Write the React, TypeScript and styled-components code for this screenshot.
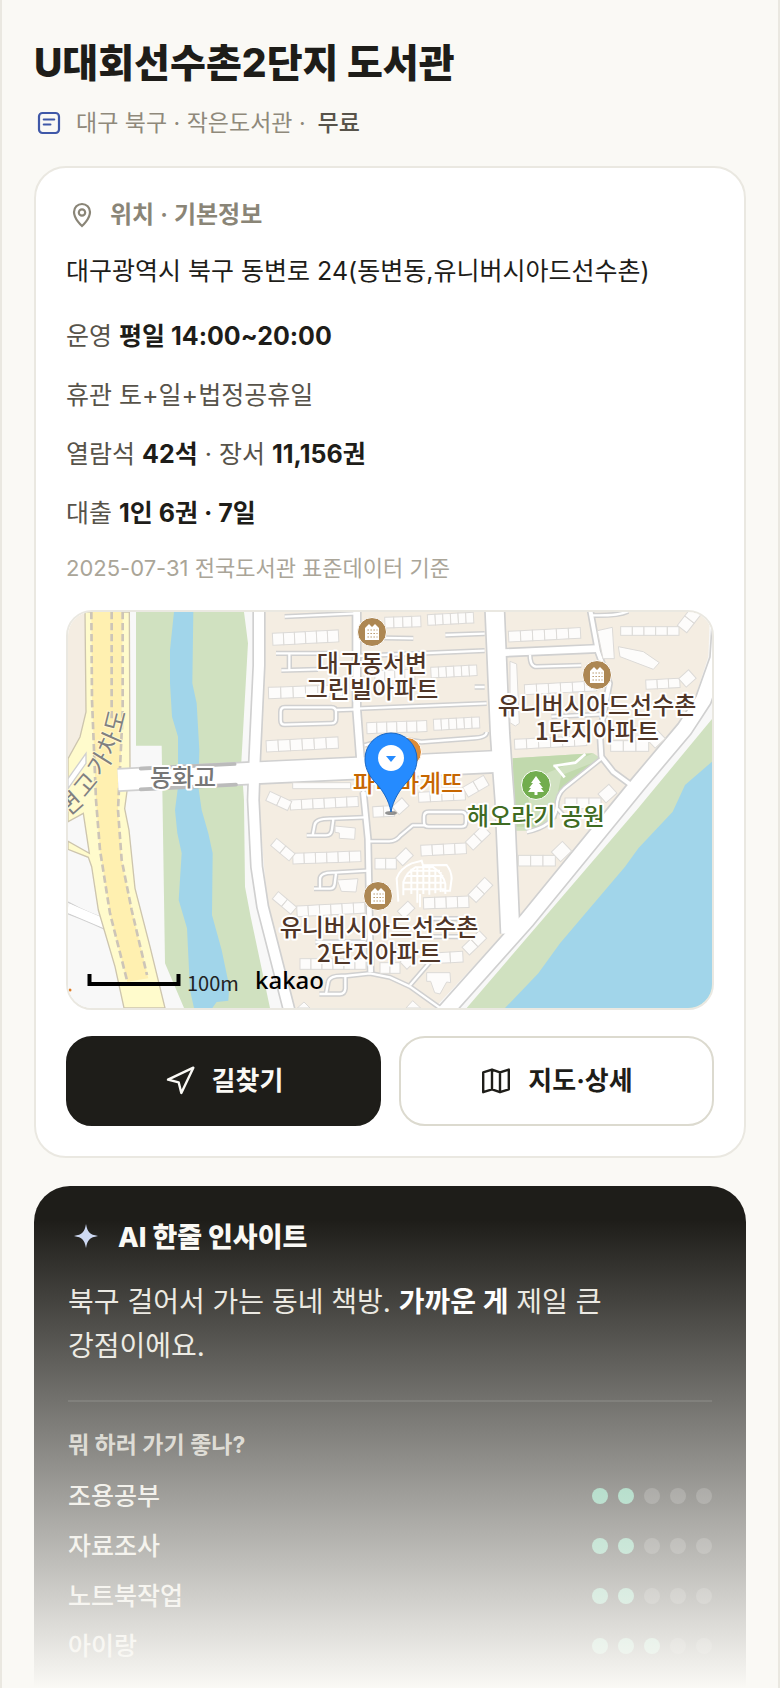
import { FC, ReactNode } from "react"
import styled, { createGlobalStyle } from "styled-components"
import { Navigation } from "lucide-react"

const GlobalStyle = createGlobalStyle`
  * {
    box-sizing: border-box;
  }

  body {
    margin: 0;
    background: #faf9f5;
    color: #1e1d19;
    font-family: Inter, "Noto Sans CJK KR", sans-serif;
  }

  h1, h2, h3, p, ul {
    margin: 0;
    padding: 0;
  }
`

const Page = styled.main`
  position: relative;
  min-height: 100vh;
  padding: 40px 32px 0;
  border: solid #eae8e1;
  border-width: 0 2px;
  overflow: hidden;
`

const Title = styled.h1`
  font-size: 39px;
  line-height: 46px;
  font-weight: 800;
`

const Meta = styled.p`
  display: flex;
  align-items: center;
  gap: 12px;
  margin: 22px 0 28px;
  font-size: 23px;
  line-height: 30px;
  color: #8f897b;

  strong {
    font-weight: 500;
    color: #57534a;
  }
`

const Card = styled.section`
  padding: 31px 30px 30px;
  background: #fff;
  border: 2px solid #eae8e1;
  border-radius: 32px;
`

const CardTitle = styled.h2`
  display: flex;
  align-items: center;
  gap: 12px;
  font-size: 24px;
  line-height: 32px;
  font-weight: 600;
  color: #8a8577;
`

const Address = styled.p`
  margin: 22px 0 26px;
  font-size: 25px;
  line-height: 36px;
`

const InfoList = styled.div`
  display: flex;
  flex-direction: column;
  gap: 17px;
`

const InfoRow = styled.p`
  font-size: 25px;
  line-height: 42px;
  color: #57534a;

  strong {
    font-weight: 700;
    color: #1e1d19;
  }
`

const Source = styled.p`
  margin: 17px 0 25px;
  font-size: 22px;
  line-height: 34px;
  color: #aaa598;
`

const MapFrame = styled.div`
  height: 400px;
  border: 2px solid #eae8e1;
  border-radius: 26px;
  overflow: hidden;

  svg {
    display: block;
    width: 100%;
    height: 100%;
  }
`

const Actions = styled.div`
  display: grid;
  grid-template-columns: 1fr 1fr;
  gap: 18px;
  margin-top: 26px;
`

const ActionButton = styled.button<{ $primary?: boolean }>`
  display: flex;
  align-items: center;
  justify-content: center;
  gap: 16px;
  height: 90px;
  padding: 0;
  border: 2px solid ${(props) => (props.$primary ? "#1e1d19" : "#dcdacf")};
  border-radius: 26px;
  background: ${(props) => (props.$primary ? "#1e1d19" : "#fff")};
  color: ${(props) => (props.$primary ? "#faf9f5" : "#1e1d19")};
  font-family: inherit;
  font-size: 26px;
  line-height: 36px;
  font-weight: 700;
  cursor: pointer;
`

const InsightCard = styled.section`
  margin-top: 28px;
  padding: 34px 34px 17px;
  background: #1e1d19;
  border-radius: 36px 36px 0 0;
  color: #e8e6df;
`

const InsightTitle = styled.h2`
  display: flex;
  align-items: center;
  gap: 14px;
  font-size: 27px;
  line-height: 36px;
  font-weight: 800;
  color: #faf9f5;
`

const InsightText = styled.p`
  max-width: 560px;
  margin: 24px 0 32px;
  font-size: 28px;
  line-height: 44px;
  word-break: keep-all;

  strong {
    font-weight: 700;
    color: #fff;
  }
`

const Purpose = styled.div`
  padding-top: 26px;
  border-top: 2px solid rgba(255, 255, 255, 0.1);
`

const PurposeTitle = styled.h3`
  margin-bottom: 9px;
  font-size: 23px;
  line-height: 34px;
  font-weight: 700;
  color: #c4c1b8;
`

const ScoreList = styled.ul`
  list-style: none;
`

const ScoreRow = styled.li`
  display: flex;
  align-items: center;
  justify-content: space-between;
  font-size: 25px;
  line-height: 50px;
  font-weight: 500;
`

const Dots = styled.span`
  display: flex;
  gap: 10px;
`

const Dot = styled.span<{ $on: boolean }>`
  width: 16px;
  height: 16px;
  border-radius: 50%;
  background: ${(props) => (props.$on ? "#5ebb96" : "rgba(255, 255, 255, 0.18)")};
`

// fades the rest of the page out towards the bottom edge
const Fade = styled.div`
  position: absolute;
  inset: auto 0 0;
  height: 468px;
  background: linear-gradient(rgba(250, 249, 245, 0), #faf9f5);
  pointer-events: none;
`

const MapLabel = styled.text`
  font-family: "Noto Sans CJK KR", sans-serif;
  font-size: 24px;
  font-weight: 500;
  text-anchor: middle;
  paint-order: stroke;
  stroke: #fff;
  stroke-width: 4px;
  stroke-linejoin: round;
`

const RoadLabel = styled(MapLabel)`
  fill: #808080;
  font-weight: 400;
  stroke: #fff8d0;
  stroke-width: 2px;
`

const NoteIcon = () => (
  <svg width="30" height="30" fill="none" stroke="#3f58a8" strokeWidth="2.2" strokeLinecap="round">
    <rect x="5" y="5" width="20" height="20" rx="3.5" />
    <path d="M9.8 11.5h10.4M9.8 16.5h6.6" />
  </svg>
)

const PinIcon = () => (
  <svg width="32" height="32" fill="none" stroke="currentColor" strokeWidth="2.2">
    <path d="M16 27s8-7 8-14a8 8 0 0 0-16 0c0 7 8 14 8 14z" />
    <circle cx="16" cy="13.5" r="3.2" />
  </svg>
)

const FoldedMapIcon = () => (
  <svg width="32" height="32" viewBox="0 0 24 24" fill="none" stroke="currentColor" strokeWidth="1.8" strokeLinejoin="round">
    <path d="M2.4 5.6 9 3.4l6 2.2 6.6-2.2v14.8L15 20.4l-6-2.2-6.6 2.2zM9 3.4v14.8M15 5.6v14.8" />
  </svg>
)

const SparkIcon = () => (
  <svg width="36" height="36" fill="#ccd8f3">
    <path d="M18 4c1.600 8.500 3.500 10.400 12 12-8.500 1.600-10.400 3.500-12 12-1.600-8.500-3.500-10.400-12-12 8.500-1.600 10.400-3.500 12-12z" />
  </svg>
)

type Row = [x: number, y: number, count: number, width: number, height: number, angle?: number]

const BUILDINGS: Row[] = [
  [613, 64, 6, 33, 36, -3],
  [601, 226, 6, 37, 34, -2],
  [594, 386, 6, 36, 34, -3],
  [896, 332, 6, 30, 33, -2],
  [1096, 322, 6, 23, 33, -3],
  [1078, 8, 6, 23, 32, -3],
  [950, 16, 4, 27, 32, -2],
  [1088, 166, 6, 23, 32, -3],
  [920, 176, 4, 30, 32, -2],
  [1321, 58, 6, 36, 32, -3],
  [1369, 218, 6, 36, 30, -3],
  [1339, 382, 6, 36, 30, -3],
  [1658, 44, 5, 35, 26],
  [1828, 40, 2, 36, 36, -52],
  [1733, 204, 3, 34, 28, -3],
  [1832, 200, 1, 40, 34, -42],
  [1628, 386, 3, 38, 32],
  [1738, 384, 1, 42, 34, -44],
  [1491, 558, 3, 36, 32],
  [1590, 546, 1, 44, 36, -42],
  [666, 564, 6, 34, 30, -3],
  [606, 538, 2, 36, 30, 25],
  [914, 584, 2, 32, 32, -3],
  [972, 584, 1, 40, 32, -42],
  [1051, 541, 4, 35, 30, -3],
  [1184, 526, 2, 36, 34, -30],
  [674, 724, 6, 34, 32, -2],
  [626, 679, 2, 36, 28, 40],
  [686, 882, 6, 34, 32, -3],
  [631, 839, 2, 36, 28, 40],
  [696, 1040, 6, 33, 32],
  [921, 739, 2, 32, 32],
  [982, 738, 1, 44, 32, -44],
  [1058, 700, 4, 34, 32, -3],
  [1192, 690, 2, 36, 34, -44],
  [1066, 857, 4, 34, 34, -2],
  [1200, 848, 2, 36, 34, -46],
  [1108, 1022, 2, 38, 32, -3],
  [1182, 1006, 2, 36, 32, -44],
  [936, 1052, 2, 30, 32],
  [996, 1050, 1, 36, 30, -44],
  [988, 898, 1, 44, 30, -44],
  [1351, 730, 3, 37, 32],
  [1450, 720, 1, 46, 40, -44],
]

const BLOCKS = [
  "M1588 56l45-10 6 94h-34z",
  "M1651 104l75 15 48 33-18 20-100-38z",
  "M1326 148l20 8 8 178-12 8-16-10z",
  "M801 642l61 6-2 34-46-3v-16l-13-2z",
  "M808 804l62-4-6 40-44-2z",
  "M1076 1082h70l2 30-12-2-20 36-16-4-12-34h-12z",
  "M688 1188l20-18 18 18z",
  "M1014 1188l20-22 24 22z",
  "M674 512h174v18H674z",
]

const LANES = [
  "M650 14l216-10",
  "M624 124h176",
  "M664 124v50M640 175l110-3",
  "M906 77l130 2",
  "M1132 69l118-4",
  "M870 132l380-16",
  "M866 290l390-16",
  "M650 286h140q14 0 14 14v20q0 14-14 14l-140 4q-12 0-12-14v-24q0-14 12-14z",
  "M804 294l62-2",
  "M890 400q50-16 110-20l60 10 160-12q36-2 36-18",
  "M1220 225h30",
  "M1386 128q0 36 20 36l134-4",
  "M1570 10q80 2 110-12",
  "M1450 314l170-8",
  "M1600 440l-110 88q-24 20-24 60l28 30M1466 588q-6 54-90 72",
  "M886 520v44",
  "M888 616l-94 4q-50-2-54 18l-6 32h40q16 0 18-18l4-30M734 670h-18",
  "M900 688h64q20 0 34-18l36-30h36",
  "M1082 600h98q14 0 14 14v16q0 14-14 14h-98q-14 0-14-14v-16q0-14 14-14z",
  "M900 776l-100 6q-44-2-44 20v28h30q12 0 14-14l4-32M756 830h-18",
  "M742 990h150",
  "M1090 920h110M1090 974h100",
  "M832 1092l74-8 60 12 60 28 90 64M832 1092q-50-4-52 22l-6 32h42q14 0 16-16v-38M774 1146h-20",
  "M1026 1120l60-70 2-60",
]

const ROADS: { d: string; width: number }[] = [
  { d: "M866-10v300l12 160", width: 20 },
  { d: "M886 540l14 140 4 210 4 190", width: 14 },
  { d: "M1310 122l276-12", width: 20 },
  { d: "M1566-10l24 130 34 94-28 150 4 70 36 46 60 44", width: 12 },
  { d: "M573-10v170l-13 280-4 124 10 200 18 120 82 320", width: 30 },
  { d: "M150 504l426-22 324-15 380-18", width: 62 },
  { d: "M1280-10l16 374 8 120 6 80 17 400", width: 54 },
  { d: "M1960-10l-10 150-44 124-56 86-139 165-335 410-250 280", width: 44 },
]

// the overpass name runs up along the road, one turned letter at a time
const OVERPASS = [
  { char: "변", x: 3, y: 192, angle: -42 },
  { char: "고", x: 18, y: 173, angle: -50 },
  { char: "가", x: 32, y: 152, angle: -58 },
  { char: "차", x: 42, y: 131, angle: -66 },
  { char: "도", x: 48, y: 109, angle: -76 },
]

const Apartment: FC<{ x: number; y: number }> = ({ x, y }) => (
  <g transform={`translate(${x} ${y})`}>
    <circle r="14.500" fill="#ad8753" stroke="#fff" strokeWidth="1" />
    <path d="M-7 8V-4l4-4 3 3 3-3 4 4V8z" fill="#fff" />
    <path d="M-4.500-2h10M-4.500 1.500h10M-4.500 5h10" stroke="#ad8753" strokeWidth="1.200" strokeDasharray="1.300 1.700" />
  </g>
)

const LocationMap = () => (
  <svg viewBox="0 0 644 396" preserveAspectRatio="xMidYMid slice" role="img" aria-label="도서관 위치 지도">
    <rect width="644" height="396" fill="#f8f8f8" />
    <g transform="scale(0.333333)">
      <path d="M204 0h324l12 94-20 356 8 114 3 260 17 90 58 274H348l-57-134-10-653h-77z" fill="#d0e1c0" />
      <path
        d="M318 0h58l-3 214 13 60 8 140-3 110 10 70 20 70 13 60-2 185 29 105 23 110-3 42-35 4-13 18h-55l-12-54-9-185-25-85 9-140-13-60-7-70 9-70V374l-18-60-6-100V114z"
        fill="#a1d5ea"
      />
      <path d="M1932 321l-226 273-510 594h736z" fill="#d0e1c0" />
      <path d="M1932 449l-81 70-37 80-103 110-40 55-195 230-65 90-100 104h621z" fill="#a1d5ea" />

      <path d="M0 870q60 34 150 64M0 905q70 26 160 70" stroke="#d0d0d0" strokeWidth="4" fill="none" />
      <path d="M0 888q70 30 156 66" stroke="#fff" strokeWidth="28" fill="none" />
      <path d="M0 0h50l4 300-18 75-36 60z" fill="#f4ede2" />
      <path
        d="M51 0h133l2 470-16 120 13 64 18 175 45 175 45 184H168l-27-124-50-170-20-130-10-28-61-24v-24l64 36-18-120-46 25V440l36-65 18-75z"
        fill="#fffbcc"
        stroke="#cdc5ae"
        strokeWidth="4"
      />
      <path d="M0 500l54-76v30L0 530z" fill="#fff" stroke="#d0d0d0" strokeWidth="4" />
      <path d="M70 0h94l-4 400-10 194 11 150 30 150 50 205-63 10-52-205-30-190-12-150-12-300z" fill="#fff0b0" />
      <path
        d="M70 0l2 264 12 300 12 150 30 190 52 205M131 0v320M164 0v300l-14 294 11 150 30 150 46 195"
        fill="none"
        stroke="#cdc5b8"
        strokeWidth="8"
        strokeDasharray="22 11"
      />

      <path
        d="M590 0h1336l-5 134-55 170-180 210-170 230-155 165-261 279H678l-77-274-30-350 1-100z"
        fill="#f4ede2"
      />
      <path d="M1334 439l242-15 24 16-124 100-10 80-66 36h-60z" fill="#d0e1c0" />
      <path d="M1334 439l242-15-140 60-60 60 30 100h-62zM1480 490l100-40-110 90z" fill="#c1d9ad" />
      <path d="M1460 460l30 36M1456 462l66-10 30-26" fill="none" stroke="#fff" strokeWidth="8" />

      <g fill="none" stroke="#d0d0d0" strokeLinejoin="round">
        {LANES.map((d) => (
          <path key={d} d={d} strokeWidth="16" />
        ))}
        {ROADS.map((road) => (
          <path key={road.d} d={road.d} strokeWidth={road.width + 10} />
        ))}
      </g>
      <g fill="none" stroke="#fff" strokeLinejoin="round">
        {LANES.map((d) => (
          <path key={d} d={d} strokeWidth="7" />
        ))}
        {ROADS.map((road) => (
          <path key={road.d} d={road.d} strokeWidth={road.width} />
        ))}
      </g>

      <g fill="#fdfcfb" stroke="#dcdad7" strokeWidth="3">
        {BUILDINGS.map(([x, y, count, width, height, angle = 0]) => (
          <g key={`${x}-${y}`} transform={`translate(${x} ${y}) rotate(${angle})`}>
            {Array.from({ length: count }, (_, i) => (
              <rect key={i} x={i * width} width={width} height={height} />
            ))}
          </g>
        ))}
        {BLOCKS.map((d) => (
          <path key={d} d={d} />
        ))}
      </g>

      <path
        d="M991 869l-5-70q10-30 45-45l30-8 4 14 71-1q14 18 15 40l-5 37h-24M1006 850v-40q10-30 36-44h54q30 20 36 50v30M1014 792h112M1006 812h124M1006 832h126M1028 776h88M1030 770v76M1048 764v108M1066 762v84M1084 764v84M1102 768v76M1118 780v60M1056 846v40"
        fill="none"
        stroke="#fff"
        strokeWidth="6"
      />
      <path d="M218 470l282-14M218 532l286-14" stroke="#bbb" strokeWidth="11" strokeLinecap="round" />
    </g>

    {OVERPASS.map(({ char, x, y, angle }) => (
      <RoadLabel key={char} y="8" transform={`translate(${x} ${y}) rotate(${angle})`}>
        {char}
      </RoadLabel>
    ))}
    <MapLabel x="115" y="174" fill="#777">동화교</MapLabel>

    <Apartment x={304} y={20} />
    <MapLabel fill="#4f3527">
      <tspan x="304" y="60">대구동서변</tspan>
      <tspan x="304" y="86">그린빌아파트</tspan>
    </MapLabel>
    <Apartment x={529} y={63} />
    <MapLabel fill="#4f3527">
      <tspan x="529" y="102">유니버시아드선수촌</tspan>
      <tspan x="529" y="128">1단지아파트</tspan>
    </MapLabel>
    <Apartment x={310} y={284} />
    <MapLabel fill="#4f3527">
      <tspan x="311" y="324">유니버시아드선수촌</tspan>
      <tspan x="311" y="350">2단지아파트</tspan>
    </MapLabel>

    <circle cx="468" cy="173" r="14.500" fill="#72ad4e" stroke="#fff" />
    <path d="M468 164l-5 7h2l-4 5h2l-3 4h6.500v3h3v-3h6.500l-3-4h2l-4-5h2z" fill="#fff" />
    <MapLabel x="468" y="213" fill="#3f6b22">해오라기 공원</MapLabel>

    <circle cx="339" cy="140" r="14.500" fill="#dd8c38" stroke="#fff" />
    <MapLabel x="340" y="180" fill="#c76600">파리바게뜨</MapLabel>

    <ellipse cx="323" cy="201" rx="6" ry="2" fill="#777" opacity="0.8" />
    <path
      d="M323 200c-2-12-9-23-17-31-6-7-9-14-9-22a26 26 0 0 1 52 0c0 8-3 15-9 22-8 8-15 19-17 31z"
      fill="#258bff"
      stroke="#1766c4"
    />
    <circle cx="323" cy="146" r="13" fill="#fff" />
    <path d="M318 144h10l-5 6z" fill="#258bff" />

    <path d="M21.500 362v10h89v-10" fill="none" stroke="#000" strokeWidth="4" />
    <text x="119" y="379" fontFamily="Noto Sans CJK KR, sans-serif" fontSize="20" fill="#222">100m</text>
    <text x="187" y="377" fontFamily="Noto Sans, sans-serif" fontSize="24" fontWeight="500">kakao</text>
    <circle cx="2" cy="378" r="1.500" fill="#dd7c28" />
  </svg>
)

type InfoProps = { label: string; children: ReactNode }

const Info: FC<InfoProps> = ({ label, children }) => (
  <InfoRow>
    {label} {children}
  </InfoRow>
)

const SCORES = [
  { name: "조용공부", score: 2 },
  { name: "자료조사", score: 2 },
  { name: "노트북작업", score: 2 },
  { name: "아이랑", score: 3 },
]

const App: FC = () => {
  return (
    <>
      <GlobalStyle />
      <Page>
        <Title>U대회선수촌2단지 도서관</Title>
        <Meta>
          <NoteIcon />
          <span>대구 북구 · 작은도서관 ·</span>
          <strong>무료</strong>
        </Meta>

        <Card>
          <CardTitle>
            <PinIcon />
            위치 · 기본정보
          </CardTitle>
          <Address>대구광역시 북구 동변로 24(동변동,유니버시아드선수촌)</Address>
          <InfoList>
            <Info label="운영">
              <strong>평일 14:00~20:00</strong>
            </Info>
            <Info label="휴관">토+일+법정공휴일</Info>
            <Info label="열람석">
              <strong>42석</strong> · 장서 <strong>11,156권</strong>
            </Info>
            <Info label="대출">
              <strong>1인 6권 · 7일</strong>
            </Info>
          </InfoList>
          <Source>2025-07-31 전국도서관 표준데이터 기준</Source>
          <MapFrame>
            <LocationMap />
          </MapFrame>
          <Actions>
            <ActionButton type="button" $primary>
              <Navigation size={32} strokeWidth={1.8} />
              길찾기
            </ActionButton>
            <ActionButton type="button">
              <FoldedMapIcon />
              지도·상세
            </ActionButton>
          </Actions>
        </Card>

        <InsightCard>
          <InsightTitle>
            <SparkIcon />
            AI 한줄 인사이트
          </InsightTitle>
          <InsightText>
            북구 걸어서 가는 동네 책방. <strong>가까운 게</strong> 제일 큰 강점이에요.
          </InsightText>
          <Purpose>
            <PurposeTitle>뭐 하러 가기 좋나?</PurposeTitle>
            <ScoreList>
              {SCORES.map(({ name, score }) => (
                <ScoreRow key={name}>
                  {name}
                  <Dots role="img" aria-label={`5점 중 ${score}점`}>
                    {[1, 2, 3, 4, 5].map((n) => (
                      <Dot key={n} $on={n <= score} />
                    ))}
                  </Dots>
                </ScoreRow>
              ))}
            </ScoreList>
          </Purpose>
        </InsightCard>
        <Fade />
      </Page>
    </>
  )
}

export default App
